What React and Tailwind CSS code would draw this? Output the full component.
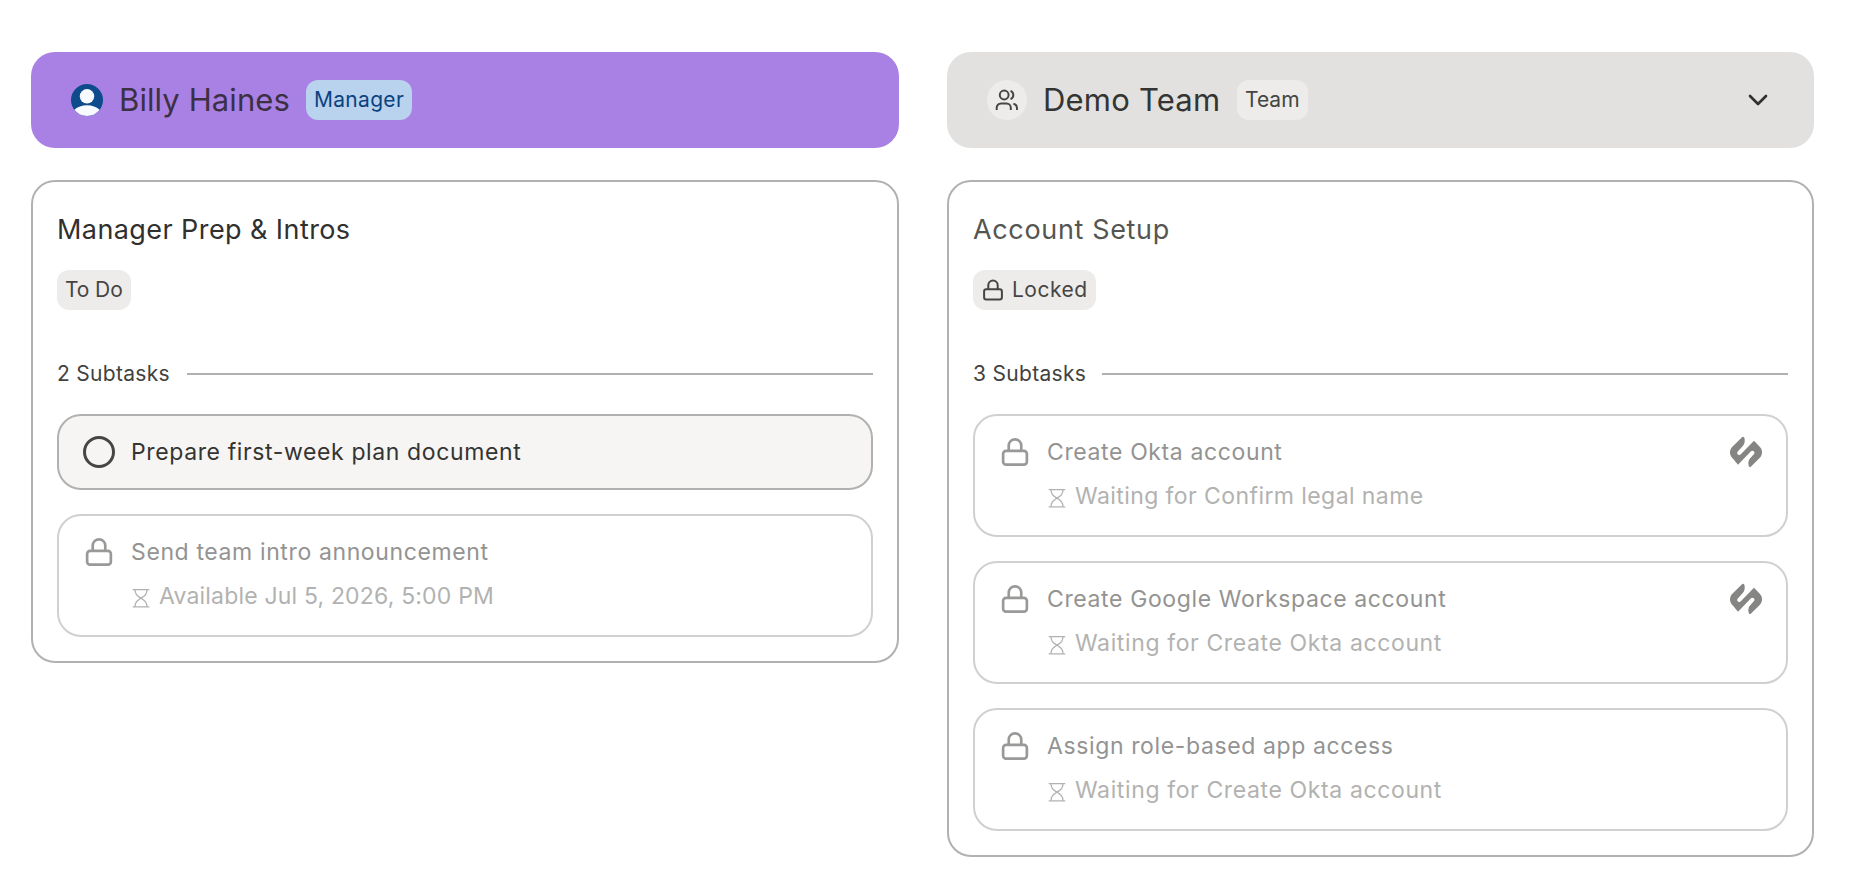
import React from "react";
import { ChevronDown } from "lucide-react";

const columns = [
  {
    name: "Billy Haines",
    role: "Manager",
    kind: "person",
    task: "Manager Prep & Intros",
    status: "To Do",
    subtasks: [
      { title: "Prepare first-week plan document" },
      { title: "Send team intro announcement", locked: true, note: "Available Jul 5, 2026, 5:00 PM", noteTracking: "tracking-[0.18px]" },
    ],
  },
  {
    name: "Demo Team",
    role: "Team",
    kind: "team",
    task: "Account Setup",
    status: "Locked",
    locked: true,
    subtasks: [
      { title: "Create Okta account", locked: true, automated: true, note: "Waiting for Confirm legal name", noteTracking: "tracking-[0.42px]" },
      { title: "Create Google Workspace account", locked: true, automated: true, note: "Waiting for Create Okta account" },
      { title: "Assign role-based app access", locked: true, note: "Waiting for Create Okta account" },
    ],
  },
];

function LockIcon({ className }) {
  return (
    <svg viewBox="0 0 24 24" fill="none" stroke="currentColor" strokeWidth="2" className={className}>
      <path d="M7.3 11V7.2a4.7 4.7 0 0 1 9.4 0V11" />
      <rect x="3.1" y="11.2" width="17.8" height="10.3" rx="2.2" />
    </svg>
  );
}

function HourglassIcon({ className }) {
  return (
    <svg viewBox="0 0 18 20" fill="none" stroke="currentColor" strokeWidth="1.3" className={className}>
      <path d="M.7 1.6h16.6M.7 18.8h16.6" />
      <path d="M3 1.6c0 5 2.5 6.2 6 8.6 3.5 2.4 6 3.6 6 8.6M15 1.6c0 5-2.5 6.2-6 8.6-3.5 2.4-6 3.6-6 8.6" />
    </svg>
  );
}

function TeamIcon() {
  return (
    <svg viewBox="0 0 24 24" fill="none" stroke="currentColor" strokeWidth="2" className="w-6 h-6">
      <circle cx="9.2" cy="7" r="4.4" />
      <path d="M1.7 22v-2.2a4.2 4.2 0 0 1 4.2-4.2h5.7a4.2 4.2 0 0 1 4.2 4.2V22" />
      <path d="M15.5 2.9a4.4 4.4 0 0 1 0 8.2M18.4 15.7a4.6 4.6 0 0 1 3.6 4.4V22" />
    </svg>
  );
}

function PersonIcon() {
  return (
    <svg viewBox="0 0 32 32" className="w-8 h-8 shrink-0">
      <circle cx="16" cy="16" r="16" fill="#0e4b8b" />
      <circle cx="16" cy="12.3" r="7.2" fill="#f7fafe" />
      <path d="M3.4 25.8C6.5 23 11 21.3 16 21.3s9.5 1.7 12.6 4.5A16 16 0 0 1 16 32a16 16 0 0 1-12.6-6.2z" fill="#f7fafe" />
    </svg>
  );
}

function AutomationLogo() {
  return (
    <svg viewBox="0 0 32 32" fill="#858584" className="w-8 h-8 shrink-0">
      <path d="M12 1.2 2.6 10.4C.9 12 0 14 0 16.3s.9 4.3 2.6 6L8 28.7l13-13.5c.7-.7 1.9-.8 2.8 0 .9.8.9 2 .2 2.8l-4.2 4.7c-1.5 1.6-1.9 5.2-.9 7.5.4.9 1.2 1.1 1.9.5l8.600-8.400c1.700-1.700 2.600-3.700 2.600-6s-.9-4.200-2.500-5.700L24 4.700l-13.200 13.600c-.8.8-2 .8-2.900.1-.9-.9-.9-2.100-.1-2.900l5.200-5.700c1.800-2 2.300-5.600 1.200-8.200-.5-1.100-1.400-1.200-2.200-.4z" />
    </svg>
  );
}

function Tag({ children, className }) {
  return (
    <span className={`inline-flex items-center h-10 px-2 rounded-xl text-[21px] whitespace-nowrap ${className}`}>
      {children}
    </span>
  );
}

function AssigneeHeader({ name, role, kind }) {
  const team = kind === "team";
  return (
    <header className={`flex items-center h-24 px-10 rounded-3xl ${team ? "bg-[#e2e1df]" : "bg-[#a981e4]"}`}>
      {team ? (
        <div className="w-10 h-10 rounded-full bg-[#edecea] text-[#474745] flex items-center justify-center">
          <TeamIcon />
        </div>
      ) : (
        <PersonIcon />
      )}
      <h2 className={`mx-4 text-[31px] leading-10 whitespace-nowrap ${team ? "w-[178px] tracking-[0.2px] text-[#343432]" : "w-[171px] tracking-[0.1px] text-[#3c3043]"}`}>{name}</h2>
      <Tag className={team ? "bg-[#edecea] text-[#454543]" : "tracking-[0.3px] bg-[#b9d2ee] text-[#0b4280]"}>{role}</Tag>
      {team && <ChevronDown className="ml-auto w-8 h-8 text-[#30302f]" strokeWidth={2} />}
    </header>
  );
}

function Subtask({ title, locked, automated, note, noteTracking = "tracking-[0.62px]" }) {
  return (
    <li className={`flex gap-4 px-6 py-5 border-2 rounded-3xl ${locked ? "h-[123px] border-[#d0d0cf]" : "h-[76px] border-[#b1b1b0] bg-[#f6f5f3]"}`}>
      {locked ? (
        <LockIcon className="w-8 h-8 shrink-0 text-[#999998]" />
      ) : (
        <span className="w-8 h-8 shrink-0 rounded-full border-[3px] border-[#454543]" />
      )}
      <div className="flex-1">
        <p className={`text-[23px] leading-8 tracking-[0.62px] ${locked ? "text-[#939392]" : "text-[#343432]"}`}>{title}</p>
        {note && (
          <p className={`mt-[9px] flex items-center text-[23px] leading-[39px] text-[#b2b2b1] ${noteTracking}`}>
            <HourglassIcon className="w-[18px] h-5 ml-px mt-0.5 mr-[9px]" />
            {note}
          </p>
        )}
      </div>
      {automated && <AutomationLogo />}
    </li>
  );
}

function TaskCard({ task, status, locked, subtasks }) {
  return (
    <section className="border-2 border-[#b1b1b0] rounded-3xl p-6">
      <h3 className={`text-[27px] leading-12 ${locked ? "tracking-[0.65px] text-[#555553]" : "tracking-[0.42px] text-[#30302f]"}`}>{task}</h3>
      <Tag className={`mt-4 bg-[#edecea] text-[#454543] ${locked ? "tracking-[0.5px]" : "tracking-[-0.1px]"}`}>
        {locked && <LockIcon className="w-6 h-6 mr-[7px]" />}
        {status}
      </Tag>
      <div className="mt-12 flex items-center gap-4 text-[21px] leading-8 tracking-[0.3px] text-[#424240]">
        <span className={`whitespace-nowrap ${locked ? "w-[113px]" : "w-[114px]"}`}>{subtasks.length} Subtasks</span>
        <span className="flex-1 h-0.5 bg-[#b1b1b0]" />
      </div>
      <ul className="mt-6 flex flex-col gap-6">
        {subtasks.map((s) => (
          <Subtask key={s.title} {...s} />
        ))}
      </ul>
    </section>
  );
}

export default function App() {
  return (
    <main className="min-h-screen bg-white pt-[52px] pl-[31px] grid grid-cols-[868px_867px] gap-12 items-start font-['Inter',sans-serif]">
      {columns.map((c) => (
        <div key={c.name} className="flex flex-col gap-8">
          <AssigneeHeader name={c.name} role={c.role} kind={c.kind} />
          <TaskCard task={c.task} status={c.status} locked={c.locked} subtasks={c.subtasks} />
        </div>
      ))}
    </main>
  );
}
